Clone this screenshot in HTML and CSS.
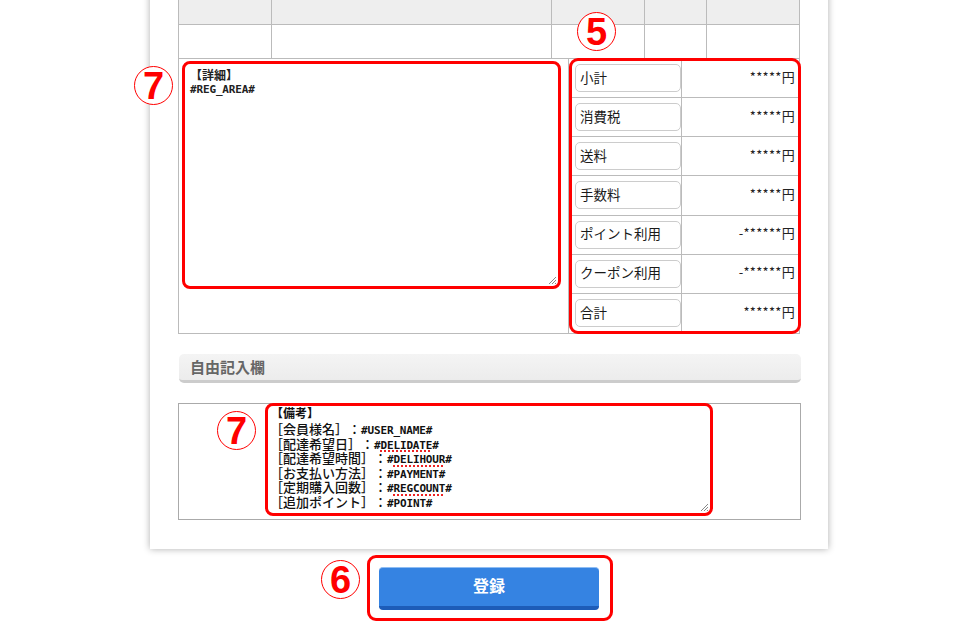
FILE: index.html
```html
<!DOCTYPE html>
<html lang="ja">
<head>
<meta charset="utf-8">
<title>注文登録</title>
<link rel="stylesheet" href="styles.css">
</head>
<body>
<div class="card">
  <div class="tbl">
    <div class="trow head">
      <div class="cell"></div><div class="cell"></div><div class="cell"></div><div class="cell"></div><div class="cell"></div>
    </div>
    <div class="trow">
      <div class="cell"></div><div class="cell"></div><div class="cell"></div><div class="cell"></div><div class="cell"></div>
    </div>
    <div class="detail-row">
      <div class="detail-left">
        <div class="ta ta-detail">
          <div class="ta-title">【詳細】</div>
          <div class="mono dline">#REG_AREA#</div>
          <span class="grip"><svg width="8" height="8" viewBox="0 0 8 8"><path d="M1 8L8 1M4 8L8 4M7 8L8 7" stroke="#888" stroke-width="1"/></svg></span>
        </div>
      </div>
      <div class="summary">
        <div class="srow"><span class="label">小計</span><span class="val">*****円</span></div>
        <div class="srow"><span class="label">消費税</span><span class="val">*****円</span></div>
        <div class="srow"><span class="label">送料</span><span class="val">*****円</span></div>
        <div class="srow"><span class="label">手数料</span><span class="val">*****円</span></div>
        <div class="srow"><span class="label">ポイント利用</span><span class="val">-******円</span></div>
        <div class="srow"><span class="label">クーポン利用</span><span class="val">-******円</span></div>
        <div class="srow"><span class="label">合計</span><span class="val">******円</span></div>
      </div>
    </div>
  </div>

  <div class="section-head">自由記入欄</div>

  <div class="memo-box">
    <div class="ta ta-memo">
      <div class="mline mtitle">【備考】</div>
      <div class="mline">［会員様名］：<span class="mono">#USER_NAME#</span></div>
      <div class="mline">［配達希望日］：<span class="mono">#<span class="sp">DELIDATE</span>#</span></div>
      <div class="mline">［配達希望時間］：<span class="mono">#<span class="sp">DELIHOUR</span>#</span></div>
      <div class="mline">［お支払い方法］：<span class="mono">#PAYMENT#</span></div>
      <div class="mline">［定期購入回数］：<span class="mono">#<span class="sp">REGCOUNT</span>#</span></div>
      <div class="mline">［追加ポイント］：<span class="mono">#POINT#</span></div>
      <span class="grip"><svg width="8" height="8" viewBox="0 0 8 8"><path d="M1 8L8 1M4 8L8 4M7 8L8 7" stroke="#888" stroke-width="1"/></svg></span>
    </div>
  </div>
</div>

<div class="actions">
  <div class="btn-wrap"><button class="btn" type="button">登録</button></div>
</div>

<span class="num n7a">7</span>
<span class="num n5">5</span>
<span class="num n7b">7</span>
<span class="num n6">6</span>
</body>
</html>
```

FILE: styles.css
```css
* { box-sizing: border-box; }
html, body { margin: 0; padding: 0; background: #fff; }
body {
  position: relative;
  width: 980px;
  height: 630px;
  overflow: hidden;
  font-family: "Noto Sans CJK JP", "Liberation Sans", sans-serif;
  color: #222;
  text-spacing-trim: space-all;
}

.card {
  width: 678px;
  margin: -20px 0 0 150px;
  padding: 19px 28px 29px 28px;
  background: #fff;
  box-shadow: 0 0 7px rgba(0, 0, 0, 0.32);
}

.tbl {
  border-top: 1px solid #bbb;
  border-left: 1px solid #bbb;
  width: 622px;
}
.trow {
  display: grid;
  grid-template-columns: 93px 280px 93px 62px 93px;
  height: 34px;
  border-bottom: 1px solid #bbb;
}
.trow.head { height: 25px; background: #eee; }
.cell { border-right: 1px solid #bbb; }

.detail-row {
  display: flex;
  height: 275px;
  border-bottom: 1px solid #bbb;
}
.detail-left {
  width: 390px;
  border-right: 1px solid #bbb;
  padding: 2px 0 0 3px;
}
.summary {
  position: relative;
  width: 231px;
  border-right: 1px solid #bbb;
  display: grid;
  grid-template-rows: repeat(7, 1fr);
}
.summary::after {
  content: "";
  position: absolute;
  top: -1px;
  left: 0;
  right: -2px;
  bottom: -1px;
  border: 3px solid #f00;
  border-radius: 9px;
}
.srow {
  display: grid;
  grid-template-columns: 113px 1fr;
  align-items: stretch;
  border-bottom: 1px solid #bbb;
}
.srow:last-child { border-bottom: none; }
.label {
  border-right: 1px solid #bbb;
  display: flex;
  align-items: center;
  padding: 0 0 3px 11px;
  font-size: 13.5px;
  line-height: 16px;
  color: #1a1a1a;
  position: relative;
}
.label::before {
  content: "";
  position: absolute;
  left: 6px;
  top: 5px;
  width: 104px;
  height: 26px;
  border: 1px solid #ccc;
  border-radius: 5px;
}
.val {
  display: flex;
  align-items: center;
  justify-content: flex-end;
  padding: 0 4px 3px 0;
  font-size: 13px;
  line-height: 16px;
  letter-spacing: 0.3px;
}

.ta {
  position: relative;
  border: 3px solid #f00;
  border-radius: 8px;
  background: #fff;
}
.ta-detail {
  width: 379px;
  height: 228px;
  padding: 3px 5px;
  font-size: 12px;
  line-height: 16px;
}
.ta-title { font-weight: 700; font-size: 12px; line-height: 15px; }
.dline { height: 16px; line-height: 16px; }
.mono {
  font-family: "DejaVu Sans Mono", "Liberation Mono", monospace;
  font-size: 11px;
  font-weight: 700;
  letter-spacing: -0.15px;
}
.grip {
  position: absolute;
  right: 2px;
  bottom: 2px;
  width: 8px;
  height: 8px;
  line-height: 0;
}

.section-head {
  margin-top: 20px;
  width: 622px;
  height: 29px;
  margin-left: 1px;
  background: linear-gradient(#f4f4f4, #ececec);
  border-bottom: 3px solid #ccc;
  border-radius: 5px;
  padding-left: 11px;
  font-size: 15px;
  font-weight: 700;
  color: #666;
  line-height: 25px;
}

.memo-box {
  margin-top: 20px;
  width: 623px;
  height: 117px;
  border: 1px solid #aaa;
  padding-left: 86px;
}
.ta-memo {
  margin-top: -1px;
  width: 448px;
  height: 113px;
  padding: 0 4px 0 2px;
  font-size: 13px;
  font-weight: 500;
}
.mline {
  white-space: nowrap;
  height: 14.5px;
  line-height: 14.5px;
  color: #111;
}
.mline.mtitle {
  font-size: 12px;
  font-weight: 700;
  height: 16px;
  line-height: 12px;
  padding: 1px 0 0 1px;
}
.sp {
  text-decoration: underline dotted #e22;
  text-underline-offset: 2px;
  text-decoration-thickness: 2px;
}

.actions {
  display: flex;
  padding-left: 367px;
  margin-top: 6px;
}
.btn-wrap {
  width: 246px;
  height: 66px;
  border: 3px solid #f00;
  border-radius: 9px;
  padding: 9px 0 0 9px;
}
.btn {
  display: block;
  width: 220px;
  height: 43px;
  border: none;
  border-top: 1px solid #8fbdf3;
  border-bottom: 4px solid #1d5cb8;
  border-radius: 4px;
  background: #3583e2;
  color: #fff;
  font-family: "Noto Sans CJK JP", sans-serif;
  font-size: 16px;
  font-weight: 700;
  line-height: 20px;
  padding: 0 0 4px 0;
}

.num {
  position: absolute;
  width: 39px;
  height: 39px;
  border: 1.5px solid #f00;
  border-radius: 50%;
  background: #fff;
  color: #f00;
  font-family: "Liberation Sans", Arial, sans-serif;
  font-weight: 700;
  font-size: 38px;
  line-height: 38px;
  text-align: center;
}
.n7a { left: 134px; top: 66px; }
.n5 { left: 577px; top: 12px; }
.n7b { left: 217px; top: 411px; }
.n6 { left: 321px; top: 560px; }
```
